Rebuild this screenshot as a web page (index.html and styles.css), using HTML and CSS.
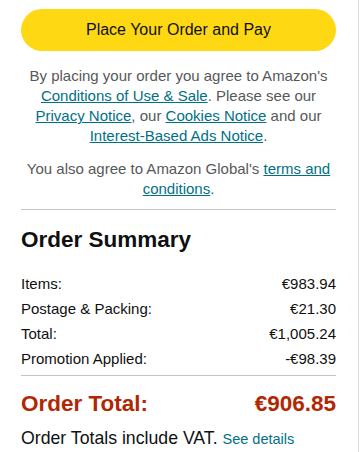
FILE: index.html
```html
<!DOCTYPE html>
<html lang="en">
<head>
<meta charset="utf-8">
<title>Place Your Order</title>
<link rel="stylesheet" href="styles.css">
</head>
<body>
<div class="panel">
  <button class="place-btn" type="button">Place Your Order and Pay</button>
  <p class="legal">By placing your order you agree to Amazon's <a href="#">Conditions of Use &amp; Sale</a>. Please see our <a href="#">Privacy Notice</a>, our <a href="#">Cookies Notice</a> and our <a href="#">Interest-Based Ads Notice</a>.</p>
  <p class="legal legal-2">You also agree to Amazon Global's <a href="#">terms and conditions</a>.</p>
  <hr class="divider">
  <h2 class="summary-title">Order Summary</h2>
  <ul class="summary-rows">
    <li class="row"><span>Items:</span><span>€983.94</span></li>
    <li class="row"><span>Postage &amp; Packing:</span><span>€21.30</span></li>
    <li class="row"><span>Total:</span><span>€1,005.24</span></li>
    <li class="row"><span>Promotion Applied:</span><span>-€98.39</span></li>
  </ul>
  <hr class="divider divider-2">
  <div class="order-total"><span>Order Total:</span><span>€906.85</span></div>
  <p class="vat">Order Totals include VAT. <a href="#" class="see-details">See details</a></p>
</div>
</body>
</html>
```
FILE: styles.css
```css
* { box-sizing: border-box; }
html, body { margin: 0; padding: 0; background: #fff; }
body {
  font-family: "Liberation Sans", Arial, sans-serif;
  color: #0F1111;
}
.panel {
  width: 359px;
  min-height: 452px;
  border-right: 1px solid #dcdcdc;
  padding: 9px 22px 0 21px;
}
.place-btn {
  display: block;
  width: 100%;
  height: 42px;
  border: none;
  border-radius: 21px;
  background: #FFD814;
  color: #0F1111;
  font-family: inherit;
  font-size: 16px;
  padding: 0;
  margin: 0;
}
.legal {
  margin: 15px 0 0;
  font-size: 15px;
  line-height: 20px;
  color: #565959;
  text-align: center;
}
.legal-2 { margin-top: 13px; }
a { color: #007185; text-decoration: underline; }
.divider {
  border: none;
  border-top: 1px solid #c4c4c4;
  margin: 10px 0 0;
  height: 0;
}
.summary-title {
  margin: 16px 0 0;
  font-size: 22.5px;
  line-height: 28px;
  font-weight: 700;
}
.summary-rows {
  list-style: none;
  margin: 20px 0 0;
  padding: 0;
  display: flex;
  flex-direction: column;
  gap: 5px;
}
.row {
  display: flex;
  justify-content: space-between;
  font-size: 15px;
  line-height: 20px;
}
.divider-2 { margin-top: 6px; }
.order-total {
  display: flex;
  justify-content: space-between;
  margin-top: 14px;
  font-size: 22.5px;
  line-height: 28px;
  font-weight: 700;
  color: #B12704;
}
.vat {
  margin: 10px 0 0;
  font-size: 17.7px;
  line-height: 20px;
}
.see-details {
  font-size: 14.5px;
  text-decoration: none;
}
```
